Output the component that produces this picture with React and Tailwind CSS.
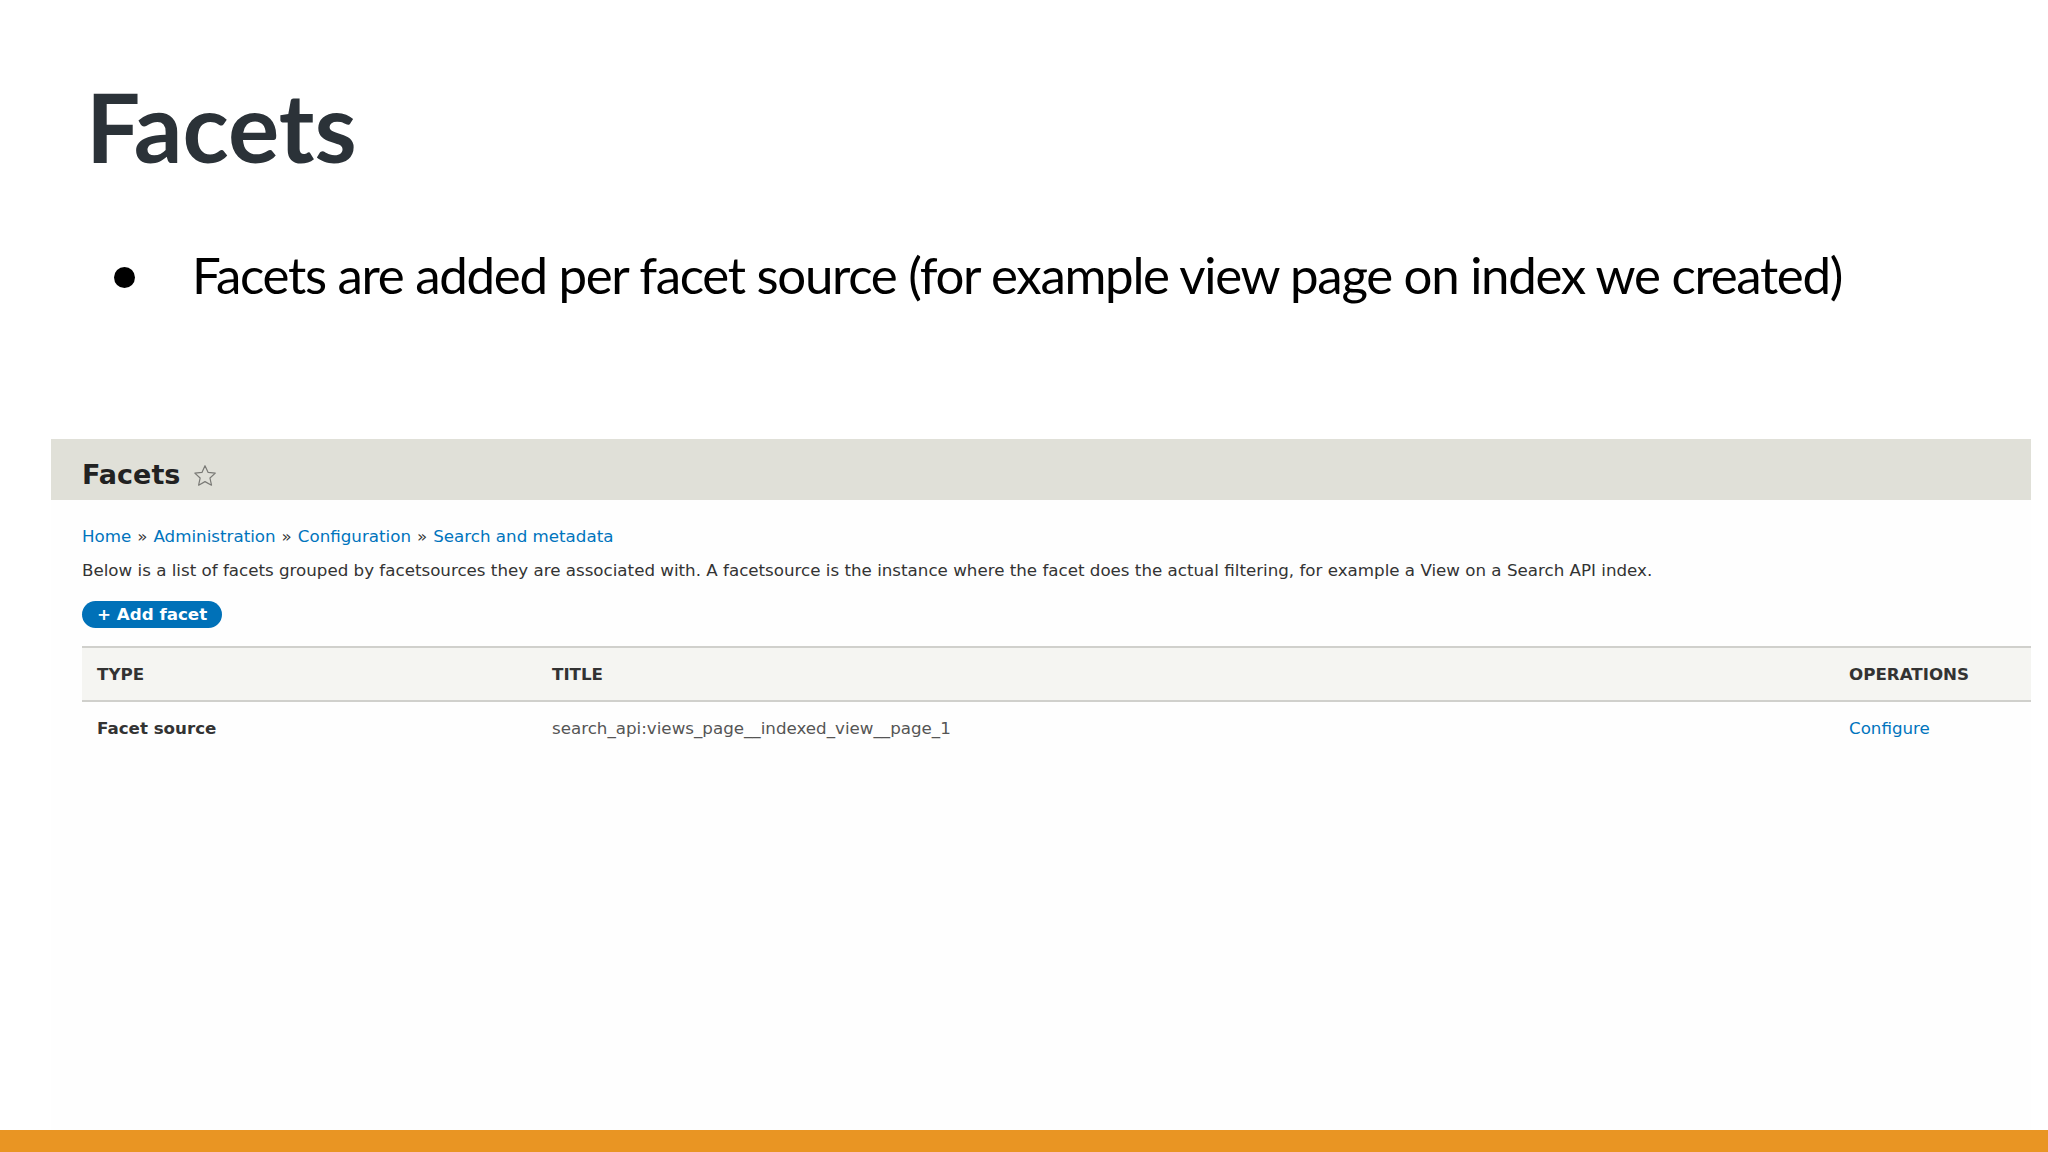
import React from 'react';

const drupal = { fontFamily: '"DejaVu Sans", sans-serif' };
const slide = { fontFamily: 'Lato, sans-serif' };

function Star() {
  return (
    <svg width="26" height="26" viewBox="0 0 24 24" fill="none" stroke="#7a7a76" strokeWidth="1.1" strokeLinejoin="round">
      <path d="M12 2.5l2.9 6.2 6.6.7-4.9 4.5 1.4 6.6L12 17.2l-5.9 3.3 1.4-6.6-4.9-4.5 6.6-.7z" />
    </svg>
  );
}

export default function App() {
  const crumbs = ['Home', 'Administration', 'Configuration', 'Search and metadata'];

  return (
    <div className="w-[2048px] h-[1152px] bg-white flex flex-col overflow-hidden">
      <h1 style={slide} className="ml-[86px] mt-[78px] text-[96px] leading-none font-bold text-[#2b3238]">
        Facets
      </h1>

      <div style={slide} className="flex items-center mt-[71px] ml-[114px] text-[51px] leading-[60px] tracking-[-1.3px] text-black whitespace-nowrap">
        <span className="w-[21px] h-[21px] rounded-full bg-black mr-[57px] mt-[4px]" />
        <span>Facets are added per facet source (for example view page on index we created)</span>
      </div>

      <div style={drupal} className="ml-[51px] w-[1980px] mt-[134px] flex-1 flex flex-col bg-[#fefefe]">
        <div className="h-[61px] bg-[#e0e0d8] flex items-center pl-[31px] pt-[12px] gap-[12px]">
          <span className="text-[27px] font-bold text-[#222]">Facets</span>
          <Star />
        </div>

        <div className="pl-[31px] pt-[24px] flex flex-col text-[16.7px]">
          <div className="text-[#0074bd] flex gap-[6px]">
            {crumbs.map((c, i) => (
              <React.Fragment key={c}>
                {i > 0 && <span className="text-[#333]">»</span>}
                <span>{c}</span>
              </React.Fragment>
            ))}
          </div>
          <p className="text-[#333] mt-[9px]">
            Below is a list of facets grouped by facetsources they are associated with. A facetsource is the instance where the facet does the actual filtering, for example a View on a Search API index.
          </p>
          <div className="mt-[18px]">
            <span className="inline-flex items-center h-[27px] px-[15px] rounded-full bg-[#0071b8] text-white font-bold">
              + Add facet
            </span>
          </div>

          <table className="mt-[18px] w-full text-left border-collapse">
            <thead>
              <tr className="bg-[#f5f5f2] border-t-2 border-b-2 border-[#d0d0cc] h-[54px]">
                <th className="pl-[15px] w-[470px] font-bold text-[#333] uppercase">Type</th>
                <th className="font-bold text-[#333] uppercase">Title</th>
                <th className="w-[182px] font-bold text-[#333] uppercase">Operations</th>
              </tr>
            </thead>
            <tbody>
              <tr className="h-[54px]">
                <td className="pl-[15px] font-bold text-[#333]">Facet source</td>
                <td className="text-[#555]">search_api:views_page__indexed_view__page_1</td>
                <td className="text-[#0074bd]">Configure</td>
              </tr>
            </tbody>
          </table>
        </div>
      </div>

      <div className="h-[22px] bg-[#e99523]" />
    </div>
  );
}
